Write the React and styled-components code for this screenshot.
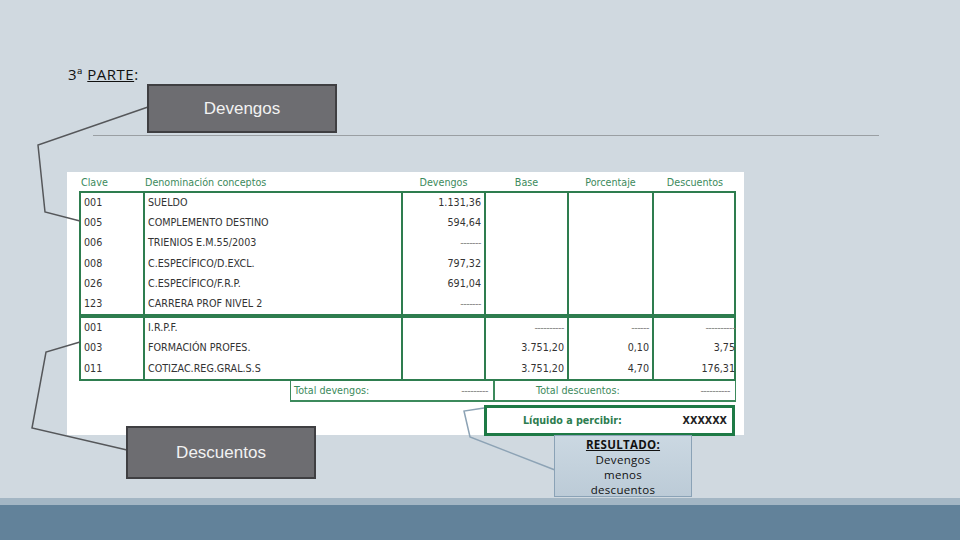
import React from "react";
import styled, { createGlobalStyle } from "styled-components";

const G = createGlobalStyle`
  html,body{margin:0;padding:0;}
  body{width:960px;height:540px;overflow:hidden;background:#d0d9e0;font-family:"Open Sans","DejaVu Sans",sans-serif;}
`;
const Slide = styled.div`position:relative;width:960px;height:540px;display:flex;flex-direction:column;`;
const Main = styled.div`flex:1;padding:64px 0 0 67px;display:flex;flex-direction:column;`;
const Title = styled.div`font-size:15px;color:#111;margin-left:1px;height:20px;letter-spacing:0.5px; u{text-decoration:underline;}`;
const Rule = styled.div`margin:51px 0 0 26px;width:786px;height:1px;background:#9a9fa3;`;
const Sheet = styled.div`margin-top:36px;width:677px;height:263px;background:#fff;box-sizing:border-box;padding:2px 8px 0 12px;font-family:"DejaVu Sans",Verdana,sans-serif;font-size:9.6px;color:#333;`;
const cols = "64px 258px 83px 83px 85px 84px";
const Head = styled.div`display:grid;grid-template-columns:${cols};height:17px;align-items:center;color:#3c8a5c;
  span{padding-left:2px;} span:nth-child(n+3){text-align:center;}`;
const Block = styled.div`display:grid;grid-template-columns:${cols};border:2px solid #2e7d4f;border-top-width:${p=>p.$top?2:0}px;`;
const Col = styled.div`display:flex;flex-direction:column;padding-top:${p=>p.$pt||0}px;border-right:${p=>p.$last?0:2}px solid #2e7d4f;text-align:${p=>p.$r?"right":"left"};
  div{height:20.2px;line-height:20px;padding:0 3px;white-space:nowrap;}`;
const Dash = styled.span`color:#888;letter-spacing:-0.5px;`;
const Totals = styled.div`display:flex;margin-left:211px;width:446px;height:21px;border:1px solid #3c8a5c;border-top:0;border-bottom-width:2px;color:#3c8a5c;box-sizing:border-box;`;
const TCell = styled.div`flex:${p=>p.$w?`0 0 ${p.$w}px`:1};display:flex;justify-content:space-between;align-items:center;padding:0 5px 0 ${p=>p.$pl||3}px;border-right:${p=>p.$br?"2px solid #3c8a5c":0};`;
const Liquido = styled.div`margin:3px 0 0 405px;width:251px;height:31px;border:3px solid #1e7a46;box-sizing:border-box;display:flex;justify-content:space-between;align-items:center;padding:0 5px 0 36px;font-weight:bold;color:#2e7d4f;font-size:9.6px;b{color:#222;}`;
const Band = styled.div`height:7px;background:#a3b6c4;`;
const Bottom = styled.div`height:35px;background:#62829a;`;
const Callout = styled.div`position:absolute;left:${p=>p.$x}px;top:${p=>p.$y}px;width:${p=>p.$w}px;height:${p=>p.$h}px;box-sizing:border-box;display:flex;align-items:center;justify-content:center;
  background:#6d6d71;border:2px solid #3f3f42;color:#f2f2f2;font-size:17px;font-family:"Liberation Sans",Arial,sans-serif;`;
const Note = styled.div`position:absolute;left:554px;top:435px;width:138px;height:62px;box-sizing:border-box;background:linear-gradient(#cbd8e2,#bccbd7);border:1px solid #8aa2b6;
  text-align:center;font-size:11.5px;line-height:15px;color:#111;padding-top:1px;letter-spacing:0.3px;b{text-decoration:underline;display:block;}`;
const Lines = styled.svg`position:absolute;left:0;top:0;pointer-events:none;`;

const top = [["001","SUELDO","1.131,36"],["005","COMPLEMENTO DESTINO","594,64"],["006","TRIENIOS E.M.55/2003","-------"],["008","C.ESPECÍFICO/D.EXCL.","797,32"],["026","C.ESPECÍFICO/F.R.P.","691,04"],["123","CARRERA PROF NIVEL 2","-------"]];
const bot = [["001","I.R.P.F.","----------","------","----------"],["003","FORMACIÓN PROFES.","3.751,20","0,10","3,75"],["011","COTIZAC.REG.GRAL.S.S","3.751,20","4,70","176,31"]];
const v = s => s.startsWith("-") ? <Dash>{s}</Dash> : s;

export default function App(){
  return <Slide><G/>
    <Main>
      <Title>3ª <u>PARTE</u>:</Title>
      <Rule/>
      <Sheet>
        <Head>{["Clave","Denominación conceptos","Devengos","Base","Porcentaje","Descuentos"].map(h=><span key={h}>{h}</span>)}</Head>
        <Block $top>
          <Col>{top.map((r,i)=><div key={i}>{r[0]}</div>)}</Col>
          <Col>{top.map((r,i)=><div key={i}>{r[1]}</div>)}</Col>
          <Col $r>{top.map((r,i)=><div key={i}>{v(r[2])}</div>)}</Col>
          <Col/><Col/><Col $last/>
        </Block>
        <Block $top>
          <Col>{bot.map((r,i)=><div key={i}>{r[0]}</div>)}</Col>
          <Col>{bot.map((r,i)=><div key={i}>{r[1]}</div>)}</Col>
          <Col/>
          <Col $r>{bot.map((r,i)=><div key={i}>{v(r[2])}</div>)}</Col>
          <Col $r>{bot.map((r,i)=><div key={i}>{v(r[3])}</div>)}</Col>
          <Col $r $last>{bot.map((r,i)=><div key={i}>{v(r[4])}</div>)}</Col>
        </Block>
        <Totals>
          <TCell $w={194} $br>Total devengos:<Dash>---------</Dash></TCell>
          <TCell $pl={41}>Total descuentos:<Dash>----------</Dash></TCell>
        </Totals>
        <Liquido>Líquido a percibir:<b>XXXXXX</b></Liquido>
      </Sheet>
    </Main>
    <Band/><Bottom/>
    <Lines width="960" height="540">
      <polyline points="148,107 38,145 45,212 80,221" fill="none" stroke="#55575a" strokeWidth="1.5"/>
      <polyline points="80,342 46,352 32,428 127,450" fill="none" stroke="#55575a" strokeWidth="1.5"/>
      <polyline points="555,470 470,437 464,411 484,408" fill="none" stroke="#8da3b5" strokeWidth="1.5"/>
    </Lines>
    <Callout $x={147} $y={84} $w={190} $h={49}>Devengos</Callout>
    <Callout $x={126} $y={426} $w={190} $h={53}>Descuentos</Callout>
    <Note><b>RESULTADO:</b>Devengos<br/>menos<br/>descuentos</Note>
  </Slide>;
}
